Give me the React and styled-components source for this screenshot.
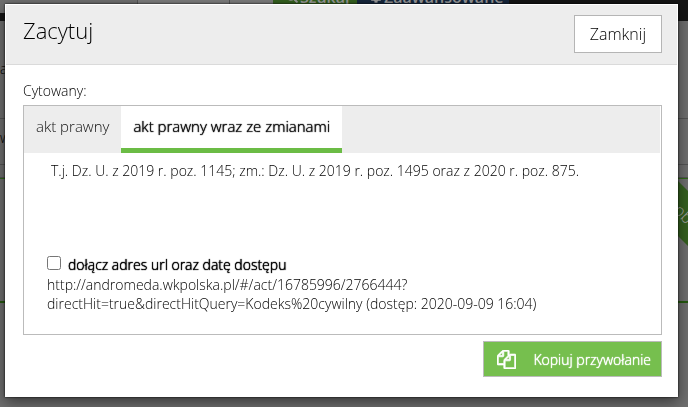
import React, { useState } from 'react'
import styled, { createGlobalStyle } from 'styled-components'
import { FaCog, FaSearch } from 'react-icons/fa'

const App = () => {
    const [tab, setTab] = useState(1)
    const tabs = ['akt prawny', 'akt prawny wraz ze zmianami']

    return (
        <>
            <GlobalStyle />
            <Page>
                <TopBar>
                    <SearchField>w</SearchField>
                    <SearchGap />
                    <SearchGap $narrow />
                    <SearchButton tabIndex={-1}><FaSearch size={12} />Szukaj</SearchButton>
                    <AdvancedButton tabIndex={-1}><FaCog size={12} />Zaawansowane</AdvancedButton>
                </TopBar>
                <Strip $height={98} $top={38}>a</Strip>
                <Strip $height={46} $top={9}>w</Strip>
                <Strip $height={13} $top={0} />
                <Result>
                    <Ribbon>obowiązujący</Ribbon>
                </Result>
            </Page>
            <Overlay>
                <Modal role='dialog' aria-labelledby='title'>
                    <Header>
                        <Title id='title'>Zacytuj</Title>
                        <CloseButton>Zamknij</CloseButton>
                    </Header>
                    <Body>
                        <Caption>Cytowany:</Caption>
                        <Panel>
                            <Tabs role='tablist'>
                                {tabs.map((name, key) => (
                                    <Tab key={key} role='tab' aria-selected={tab === key} $active={tab === key} onClick={() => setTab(key)}>
                                        {name}
                                    </Tab>
                                ))}
                            </Tabs>
                            <Citation>T.j. Dz. U. z 2019 r. poz. 1145; zm.: Dz. U. z 2019 r. poz. 1495 oraz z 2020 r. poz. 875.</Citation>
                            <Source>
                                <Label>
                                    <Checkbox type='checkbox' />
                                    dołącz adres url oraz datę dostępu
                                </Label>
                                <Address>
                                    http://andromeda.wkpolska.pl/#/act/16785996/2766444?<wbr />directHit=true&amp;directHitQuery=Kodeks%20cywilny (dostęp: 2020-09-09 16:04)
                                </Address>
                            </Source>
                        </Panel>
                        <CopyButton>
                            <CopyIcon />
                            Kopiuj przywołanie
                        </CopyButton>
                    </Body>
                </Modal>
            </Overlay>
        </>
    )
}

const CopyIcon = () => (
    <svg width='19' height='19' viewBox='0 0 1792 1792' fill='#fff' stroke='#fff' strokeWidth='70' aria-hidden='true'>
        <path d='M1696 384q40 0 68 28t28 68v1216q0 40-28 68t-68 28h-960q-40 0-68-28t-28-68v-288h-544q-40 0-68-28t-28-68v-672q0-40 20-88t48-76l408-408q28-28 76-48t88-20h416q40 0 68 28t28 68v328q68-40 128-40h416zm-544 213l-299 299h299v-299zm-640-384l-299 299h299v-299zm196 647l316-316v-416h-384v416q0 40-28 68t-68 28h-416v640h512v-256q0-40 20-88t48-76zm956 804v-1152h-384v416q0 40-28 68t-68 28h-416v640h896z' />
    </svg>
)

export default App

const GlobalStyle = createGlobalStyle`
    * {
        box-sizing: border-box;
    }
    body {
        margin: 0;
        overflow: hidden;
        font-family: 'Open Sans', sans-serif;
        font-size: 14px;
        font-weight: 300;
        color: #000;
    }
    button {
        font: inherit;
        color: inherit;
    }
`
/* the page under the dialog is scrolled down by half of its top bar */
const Page = styled.div`
    min-height: calc(100vh + 20px);
    margin-top: -20px;
    background: #6f6f6f;
`
const TopBar = styled.div`
    display: flex;
    height: 41px;
    padding-bottom: 8px;
    background: #151515;
`
const SearchField = styled.div`
    width: 138px;
    padding: 5px 0 0 116px;
    border-right: 1px solid #555;
    background: #6f6f6f;
    line-height: 20px;
    font-weight: 600;
`
const SearchGap = styled.div`
    width: ${({ $narrow }) => ($narrow ? 43 : 92)}px;
    border-right: ${({ $narrow }) => ($narrow ? 0 : 1)}px solid #555;
    background: #7d7d7d;
`
const SearchButton = styled.button`
    display: flex;
    align-items: center;
    gap: 2px;
    width: 84px;
    height: 33px;
    padding: 0 0 0 13px;
    border: 0;
    background: #35611f;
    color: #999;
    font-size: 16px;
    font-weight: 600;
`
const AdvancedButton = styled(SearchButton)`
    width: 152px;
    background: #16273c;
`
const Strip = styled.div`
    height: ${({ $height }) => $height}px;
    padding-top: ${({ $top }) => $top}px;
    border-bottom: 1px solid #555;
    line-height: 19px;
`
const Result = styled.div`
    position: relative;
    height: 125px;
    border-top: 1px solid #2f6b17;
    border-bottom: 2px solid #24590e;
    overflow: hidden;
`
const Ribbon = styled.div`
    position: absolute;
    top: 52px;
    right: -112px;
    width: 160px;
    padding-left: 19px;
    line-height: 39px;
    background: #35611f;
    color: #aaa;
    font-size: 16px;
    transform: rotate(45deg);
`
const Overlay = styled.div`
    position: fixed;
    inset: 0;
    padding: 4px 10px 10px 5px;
`
const Modal = styled.section`
    display: flex;
    flex-direction: column;
    height: 100%;
    background: #fff;
    box-shadow: 0 0 2px #000, 0 5px 14px rgba(0, 0, 0, 0.5);
`
const Header = styled.header`
    display: flex;
    justify-content: space-between;
    align-items: flex-start;
    margin: 1px;
    padding: 10px 15px 11px 17px;
    border-bottom: 1px solid #dadada;
    background: #ededed;
`
const Title = styled.h1`
    margin: 0;
    font-size: 22px;
    line-height: 30px;
    font-weight: 300;
`
const CloseButton = styled.button`
    height: 38px;
    padding: 0 15px;
    border: 1px solid #b5b5b5;
    background: #fff;
    font-size: 16px;
`
const Body = styled.div`
    display: flex;
    flex-direction: column;
    padding: 15px 16px 20px 18px;
`
const Caption = styled.div`
    margin-bottom: 4px;
    line-height: 20px;
`
const Panel = styled.div`
    margin-bottom: 6px;
    border: 1px solid #bbb;
`
const Tabs = styled.div`
    display: flex;
    height: 47px;
    margin-right: 1px;
    background: #ededed;
`
const Tab = styled.button`
    padding: 0 12px 2px;
    border: 0;
    border-bottom: 5px solid ${({ $active }) => ($active ? '#6bbc45' : '#ededed')};
    background: ${({ $active }) => ($active ? '#fff' : '#ededed')};
    color: #111;
    font-size: 15px;
    text-shadow: ${({ $active }) => ($active ? '0 0 1px #222, 0 0 1px #222' : 'none')};
`
const Citation = styled.p`
    min-height: 82px;
    margin: 0;
    padding: 8px 27px;
    line-height: 20px;
`
const Source = styled.div`
    padding: 20px 23px 21px;
`
const Label = styled.label`
    display: flex;
    align-items: center;
    gap: 7px;
    line-height: 20px;
    text-shadow: 0 0 1px #000, 0 0 1px #000;
`
const Checkbox = styled.input`
    width: 14px;
    height: 14px;
    margin: 0 0 5px;
`
const Address = styled.div`
    line-height: 19px;
`
const CopyButton = styled.button`
    display: flex;
    align-items: center;
    align-self: flex-end;
    gap: 17px;
    height: 36px;
    padding: 0 10px 0 13px;
    border: 1px solid #bbb;
    background: #76bf4e;
    color: #fff;
    text-shadow: 0 0 1px #fff, 0 0 1px #fff;
`
